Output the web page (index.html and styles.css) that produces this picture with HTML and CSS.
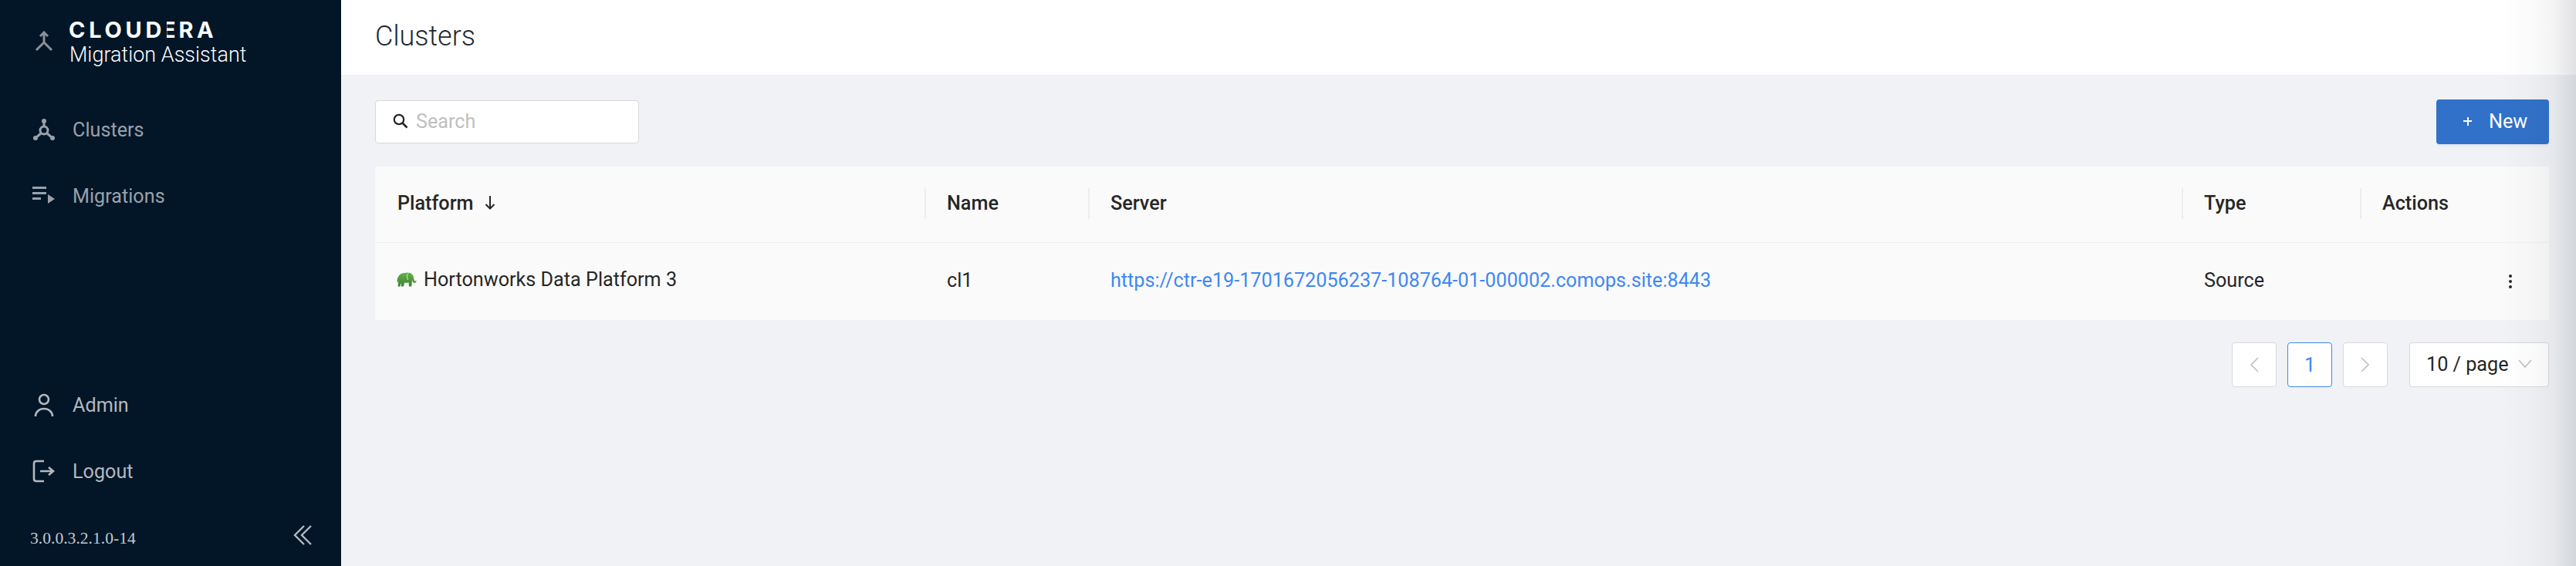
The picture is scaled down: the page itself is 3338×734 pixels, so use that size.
FILE: index.html
```html
<!DOCTYPE html>
<html lang="en">
<head>
<meta charset="utf-8">
<title>Clusters</title>
<link rel="stylesheet" href="styles.css">
</head>
<body>
<div class="app">
  <aside class="sidebar">
    <div class="brand">
      <svg class="brand-icon" width="26" height="28" viewBox="0 0 26 28"><path d="M13 2v14M13 15L3 25M13 15l10 10M8 7l5-5 5 5" fill="none" stroke="#8a9098" stroke-width="3"/></svg>
      <div class="brand-text">
        <div class="logo">CLOUD<span class="logo-e">E</span>RA</div>
        <div class="product">Migration Assistant</div>
      </div>
    </div>
    <nav class="nav">
      <a class="nav-item nav-dim">
        <span class="nav-icon"><svg width="30" height="30" viewBox="0 0 30 30"><g fill="none" stroke="#9aa1aa" stroke-width="3"><circle cx="15" cy="16" r="5"/><path d="M15 4v8M11 20l-7 6M19 20l7 6"/></g><g fill="#9aa1aa"><circle cx="15" cy="4" r="3"/><circle cx="4" cy="26" r="3"/><circle cx="26" cy="26" r="3"/></g></svg></span>
        <span>Clusters</span>
      </a>
      <a class="nav-item nav-dim">
        <span class="nav-icon"><svg width="30" height="30" viewBox="0 0 30 30"><g fill="#9aa1aa"><rect x="0" y="3" width="18" height="3"/><rect x="0" y="10" width="18" height="3"/><rect x="0" y="17" width="11" height="3"/><path d="M20 13l9 6-9 6z"/></g></svg></span>
        <span>Migrations</span>
      </a>
    </nav>
    <div class="spacer"></div>
    <nav class="nav">
      <a class="nav-item">
        <span class="nav-icon"><svg width="30" height="30" viewBox="0 0 30 30"><g fill="none" stroke="#b4b8be" stroke-width="2.6"><circle cx="15" cy="8" r="6"/><path d="M4 30c0-6 5-10 11-10s11 4 11 10"/></g></svg></span>
        <span>Admin</span>
      </a>
      <a class="nav-item">
        <span class="nav-icon"><svg width="30" height="30" viewBox="0 0 30 30"><g fill="none" stroke="#b4b8be" stroke-width="2.6"><path d="M15 2H5Q2 2 2 5v20q0 3 3 3h10M10 15h17M21 10l6 5-6 5"/></g></svg></span>
        <span>Logout</span>
      </a>
    </nav>
    <div class="sidebar-foot">
      <span class="version">3.0.0.3.2.1.0-14</span>
      <svg width="24" height="26" viewBox="0 0 24 26"><path d="M14 1L2 13l12 12M23 1L11 13l12 12" fill="none" stroke="#b4b8be" stroke-width="2.4"/></svg>
    </div>
  </aside>
  <div class="main">
    <header class="page-header"><h1 class="page-title">Clusters</h1></header>
    <section class="content">
      <div class="toolbar">
        <label class="search">
          <svg width="20" height="20" viewBox="0 0 20 20"><circle cx="8" cy="8" r="6.2" fill="none" stroke="#262626" stroke-width="2.2"/><path d="M12.5 12.5l6 6" stroke="#262626" stroke-width="2.6"/></svg>
          <span class="search-placeholder">Search</span>
        </label>
        <button class="btn-new"><span class="plus"></span><span>New</span></button>
      </div>
      <table class="table">
        <colgroup><col class="c1"><col class="c2"><col class="c3"><col class="c4"><col class="c5"></colgroup>
        <thead>
          <tr>
            <th><span class="th-sort">Platform <svg width="14" height="18" viewBox="0 0 14 18"><path d="M7 0v16M1.5 11L7 16.5 12.5 11" fill="none" stroke="#262626" stroke-width="2"/></svg></span></th>
            <th class="div">Name</th>
            <th class="div">Server</th>
            <th class="div">Type</th>
            <th class="div">Actions</th>
          </tr>
        </thead>
        <tbody>
          <tr>
            <td><span class="platform">
              <svg width="26" height="20" viewBox="0 0 26 20"><defs><linearGradient id="eg" x1="0" y1="0" x2="0" y2="1"><stop offset="0" stop-color="#62b347"/><stop offset="1" stop-color="#3f7f35"/></linearGradient></defs><path d="M0.500 11C1 5 5 1 10 1c2-.5 5-1 7.500 0 3 1 4 3.500 4.500 6 .3 2 .8 4.500 1.800 4.800.7 0 1.200-.8 1.500-1.500.5 1.700-.3 3.700-2 3.700-1.800 0-2.800-2-3.300-4l-.7 8.500H16l-.5-5.500c-1.500 1-4 1-5.500.5l-1 5H6l-.2-5-1.300 5h-3l1-7.500L1.200 14z" fill="url(#eg)"/><path d="M15 1.500c-1.500 1.500-2 3-1.500 4.500.5 1.500 1 2.500.7 4" fill="none" stroke="#dcebd4" stroke-width="1"/></svg>
              Hortonworks Data Platform 3</span></td>
            <td>cl1</td>
            <td><a class="link">https://ctr-e19-1701672056237-108764-01-000002.comops.site:8443</a></td>
            <td>Source</td>
            <td class="actions"><span class="kebab"><i></i><i></i><i></i></span></td>
          </tr>
        </tbody>
      </table>
      <div class="pagination">
        <span class="page"><svg width="12" height="20" viewBox="0 0 12 20"><path d="M11 1L2 10l9 9" fill="none" stroke="#bfbfbf" stroke-width="1.6"/></svg></span>
        <span class="page page-active">1</span>
        <span class="page"><svg width="12" height="20" viewBox="0 0 12 20"><path d="M1 1l9 9-9 9" fill="none" stroke="#bfbfbf" stroke-width="1.6"/></svg></span>
        <span class="page-size">10 / page <svg width="18" height="12" viewBox="0 0 18 12"><path d="M1 1l8 9 8-9" fill="none" stroke="#bfbfbf" stroke-width="1.6"/></svg></span>
      </div>
    </section>
  </div>
  <div class="edge-shade"></div>
</div>
</body>
</html>
```
FILE: styles.css
```css
* { box-sizing: border-box; }
html, body { margin: 0; height: 100%; }
body { font-family: Roboto, "Liberation Sans", sans-serif; font-size: 25.2px; color: #262626; overflow: hidden; }
.app { display: flex; height: 734px; position: relative; }

.sidebar { width: 442px; flex: none; background: #021627; display: flex; flex-direction: column; color: #b4b8be; }
.brand { height: 125px; display: flex; align-items: flex-start; padding: 24px 0 0 44px; gap: 20px; }
.brand-icon { margin-top: 16px; }
.brand-text { color: #fff; }
.logo { font-family: Inter, sans-serif; font-weight: 700; font-size: 29px; line-height: 30px; letter-spacing: 4.7px; margin-left: -1px; }
.logo-e { position: relative; display: inline-block; margin: 0 -1px 0 -4px; }
.logo-e::before { content: ""; position: absolute; left: 0; top: 0; bottom: 0; width: 6px; background: #021627; }
.product { font-weight: 300; font-size: 27px; line-height: 30px; margin-top: 2px; }
.nav-item { height: 86px; display: flex; align-items: center; padding-left: 42px; gap: 22px; }
.nav-dim { color: #9aa1aa; }
.nav-icon { width: 30px; height: 30px; display: block; flex: none; }
.spacer { flex: 1; }
.sidebar-foot { height: 80px; display: flex; align-items: flex-start; justify-content: space-between; padding: 27px 38px 0 39px; }
.version { font-family: "Liberation Serif", serif; font-size: 21.6px; line-height: 34px; color: #c6c9cd; }

.main { flex: 1; min-width: 0; background: #f0f2f5; display: flex; flex-direction: column; }
.page-header { height: 97px; background: #fff; padding: 0 0 3px 44px; display: flex; align-items: center; }
.page-title { margin: 0; font-weight: 300; font-size: 36px; color: #1f2933; }
.content { padding: 32px 35px 0 44px; }
.toolbar { display: flex; justify-content: space-between; align-items: center; height: 58px; }
.search { width: 342px; height: 56px; background: #fff; border: 1px solid #d9d9d9; border-radius: 4px; display: flex; align-items: center; padding: 0 0 2px 22px; gap: 10px; }
.search-placeholder { color: #bfbfbf; }
.btn-new { width: 146px; height: 58px; background: #3171c9; border: 0; border-radius: 4px; color: #fff; font: inherit; display: flex; align-items: center; padding: 0 0 2px 35px; gap: 22px; box-shadow: 0 3px 0 rgba(0,0,0,.03); }
.plus { width: 11px; height: 11px; background: linear-gradient(#fff,#fff) center/11px 2px no-repeat, linear-gradient(#fff,#fff) center/2px 11px no-repeat; }

.table { width: 100%; margin-top: 29px; border-collapse: collapse; table-layout: fixed; background: #fafafa; }
.c1 { width: 712px; } .c2 { width: 212px; } .c3 { width: 1417px; } .c4 { width: 231px; } .c5 { width: 245px; }
th { height: 98px; padding: 0 0 3px 29px; text-align: left; font-weight: 500; border-bottom: 1px solid #f0f0f0; position: relative; }
.div::before { content: ""; position: absolute; left: 0; top: 28px; height: 40px; width: 1.500px; background: #eceded; }
td { height: 101px; padding: 0 0 3px 29px; }
.th-sort { display: inline-flex; align-items: center; gap: 14px; }
.platform { display: inline-flex; align-items: center; gap: 9px; margin-left: -1px; }
.link { color: #3e88f2; }
.actions { text-align: right; padding-right: 48px; }
.kebab { display: inline-flex; flex-direction: column; gap: 2.500px; vertical-align: middle; }
.kebab i { width: 4.500px; height: 4.500px; border-radius: 50%; background: #262626; display: block; }

.pagination { display: flex; justify-content: flex-end; align-items: center; gap: 14px; margin-top: 29px; }
.page { width: 58px; height: 58px; background: #fff; border: 1px solid #d9d9d9; border-radius: 4px; display: flex; align-items: center; justify-content: center; }
.page-active { border-color: #3e88f2; color: #3e88f2; }
.page-size { width: 181px; height: 58px; margin-left: 14px; background: #fff; border: 1px solid #d9d9d9; border-radius: 4px; display: flex; align-items: center; justify-content: space-between; padding: 0 21px 2px; white-space: nowrap; }

.edge-shade { position: absolute; right: 0; top: 0; bottom: 0; width: 100px; background: linear-gradient(to right, rgba(40,45,60,0), rgba(40,45,60,.02) 40%, rgba(40,45,60,.05) 70%, rgba(40,45,60,.14)); pointer-events: none; }
```
